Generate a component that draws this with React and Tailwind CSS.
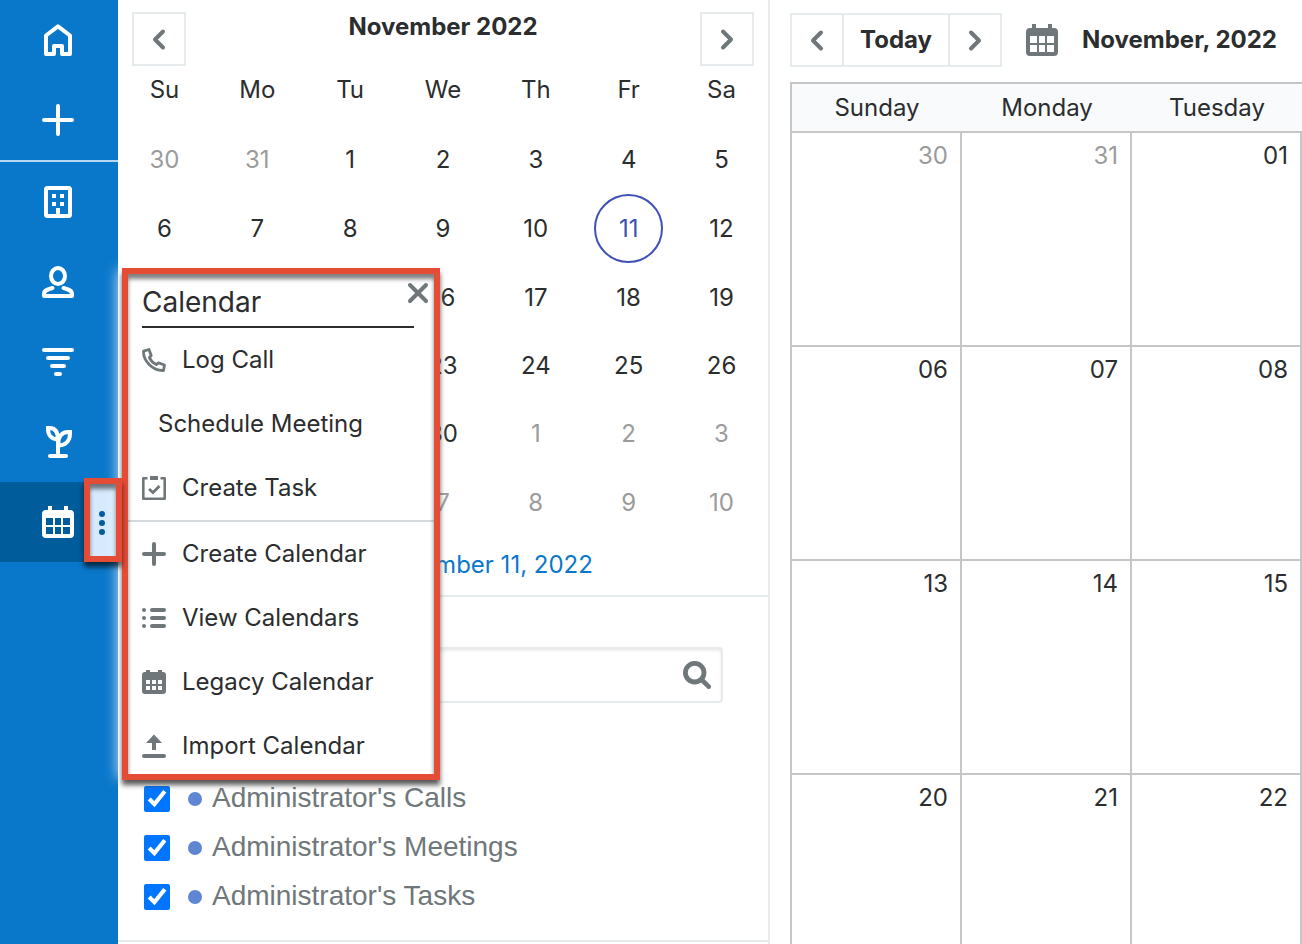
const DAY_NAMES = ['Su', 'Mo', 'Tu', 'We', 'Th', 'Fr', 'Sa'];

const MINI_WEEKS = [
  [30, 31, 1, 2, 3, 4, 5],
  [6, 7, 8, 9, 10, 11, 12],
  [13, 14, 15, 16, 17, 18, 19],
  [20, 21, 22, 23, 24, 25, 26],
  [27, 28, 29, 30, 1, 2, 3],
  [4, 5, 6, 7, 8, 9, 10],
];

const MAIN_WEEKS = [
  ['30', '31', '01'],
  ['06', '07', '08'],
  ['13', '14', '15'],
  ['20', '21', '22'],
];

const CALENDARS = ["Administrator's Calls", "Administrator's Meetings", "Administrator's Tasks"];

function Icon({ size = 'size-8', box = 32, children }) {
  return (
    <svg
      className={`${size} shrink-0`}
      viewBox={`0 0 ${box} ${box}`}
      fill="none"
      stroke="currentColor"
      strokeWidth="4"
      strokeLinecap="round"
      strokeLinejoin="round"
      aria-hidden="true"
    >
      {children}
    </svg>
  );
}

function HomeIcon() {
  return (
    <Icon>
      <path d="M16 2.4 4 11.500v18.500h8v-8h8v8h8V11.500z" />
    </Icon>
  );
}

function AddIcon() {
  return (
    <Icon>
      <path d="M2 16h28M16 2v28" />
    </Icon>
  );
}

function BuildingIcon() {
  return (
    <Icon>
      <rect x="4" y="2" width="24" height="28" rx="1.5" />
      <path d="M10 8h4v4h-4zM18 8h4v4h-4zM10 16h4v4h-4zM18 16h4v4h-4zM14 22h4v8h-4z" fill="currentColor" stroke="none" />
    </Icon>
  );
}

function PersonIcon() {
  return (
    <Icon>
      <ellipse cx="16" cy="10" rx="7" ry="8" />
      <path d="M10.5 22C5 23.4 2 24.6 2 28v2h28v-2c0-3.400-3-4.600-8.500-6" />
    </Icon>
  );
}

function FunnelIcon() {
  return (
    <Icon>
      <path d="M2 4h28M6 12h20M10 20h12M14 28h4" />
    </Icon>
  );
}

function PlantIcon() {
  return (
    <Icon>
      <path d="M16 13v17M8 30h16" />
      <path d="M6 2h1.500C13 2 16 6 16 13.500 10 13.500 6 9.500 6 3zM28 6h-2c-6 0-10 4.500-10 13.500C23.500 19.500 28 15 28 7.500z" strokeLinejoin="miter" />
    </Icon>
  );
}

function CalendarIcon() {
  return (
    <Icon>
      <path
        d="M6 4V0h4v4h12V0h4v4h2a4 4 0 0 1 4 4v20a4 4 0 0 1-4 4H4a4 4 0 0 1-4-4V8a4 4 0 0 1 4-4zM4 12v7h7v-7zM13 12v7h6v-7zM21 12v7h7v-7zM4 21v7h7v-7zM13 21v7h6v-7zM21 21v7h7v-7z"
        fill="currentColor"
        fillRule="evenodd"
        stroke="none"
      />
    </Icon>
  );
}

function Chevron({ right }) {
  return (
    <Icon size="size-6" box={24}>
      <path d={right ? 'm8 4.500 8 8-8 8' : 'm16 4.500-8 8 8 8'} />
    </Icon>
  );
}

function PhoneIcon() {
  return (
    <Icon size="size-6" box={24}>
      <path
        d="M1.500 3.200 7 1.500l2.200 6-1.900 2.200c1.500 3 4 5.400 7 6.900l2.200-1.700 6 2.100-1 5.500C11 23 1 13 1.500 3.200z"
        strokeWidth="2.800"
      />
    </Icon>
  );
}

function TaskIcon() {
  return (
    <Icon size="size-6" box={24}>
      <path d="M5.500 2.300H1.300v20.400h21.400V2.300h-4.200" strokeWidth="2.600" strokeLinecap="butt" />
      <path d="M8 0h8v4H8z" fill="currentColor" stroke="none" />
      <path d="m7 13 4 3.500 6.500-6.500" strokeWidth="2.800" strokeLinecap="butt" strokeLinejoin="miter" />
    </Icon>
  );
}

function PlusIcon() {
  return (
    <Icon size="size-6" box={24}>
      <path d="M2 12h20M12 2v20" />
    </Icon>
  );
}

function ListIcon() {
  return (
    <Icon size="size-6" box={24}>
      <path d="M2 4h0M2 12h0M2 20h0M10 4h12M10 12h12M10 20h12" />
    </Icon>
  );
}

function LegacyIcon() {
  return (
    <Icon size="size-6" box={24}>
      <path
        d="M4 2V0h4v2h8V0h4v2h1a3 3 0 0 1 3 3v16a3 3 0 0 1-3 3H3a3 3 0 0 1-3-3V5a3 3 0 0 1 3-3zM4 10v4h4v-4zM10 10v4h4v-4zM16 10v4h4v-4zM4 16v4h4v-4zM10 16v4h4v-4zM16 16v4h4v-4z"
        fill="currentColor"
        fillRule="evenodd"
        stroke="none"
      />
    </Icon>
  );
}

function ImportIcon() {
  return (
    <Icon size="size-6" box={24}>
      <path d="m12 .5 8 8.500h-6v7h-4V9H4z" fill="currentColor" stroke="none" />
      <path d="M2 22h20" />
    </Icon>
  );
}

function CloseIcon() {
  return (
    <Icon size="size-6" box={24}>
      <path d="m4 4 16 16M20 4 4 20" />
    </Icon>
  );
}

function SearchIcon() {
  return (
    <Icon size="size-7" box={28}>
      <circle cx="11.700" cy="11.700" r="9.300" strokeWidth="4.800" />
      <path d="m19 19 6.700 6.700" strokeWidth="4.600" />
    </Icon>
  );
}

const NAV_MODULES = [
  { label: 'Accounts', icon: <BuildingIcon /> },
  { label: 'Contacts', icon: <PersonIcon /> },
  { label: 'Opportunities', icon: <FunnelIcon /> },
  { label: 'Leads', icon: <PlantIcon /> },
];

const CREATE_ACTIONS = [
  { label: 'Log Call', icon: <PhoneIcon /> },
  { label: 'Schedule Meeting', icon: null },
  { label: 'Create Task', icon: <TaskIcon /> },
];

const CALENDAR_ACTIONS = [
  { label: 'Create Calendar', icon: <PlusIcon /> },
  { label: 'View Calendars', icon: <ListIcon /> },
  { label: 'Legacy Calendar', icon: <LegacyIcon /> },
  { label: 'Import Calendar', icon: <ImportIcon /> },
];

function Sidebar() {
  return (
    <nav className="w-[118px] shrink-0 bg-[#0a78ca] text-white">
      <div className="border-b-2 border-[#b5d7ef]">
        <a href="#home" aria-label="Home" className="flex h-20 items-center pl-[42px]">
          <HomeIcon />
        </a>
        <button type="button" aria-label="Quick create" className="flex h-20 w-full items-center pl-[42px]">
          <AddIcon />
        </button>
      </div>
      {NAV_MODULES.map((item) => (
        <a key={item.label} href="#module" aria-label={item.label} className="flex h-20 items-center pl-[42px]">
          {item.icon}
        </a>
      ))}
      <div className="relative flex h-20 bg-[#005c9b]">
        <a href="#calendar" aria-label="Calendar" className="flex flex-1 items-center pl-[42px]">
          <CalendarIcon />
        </a>
        <button
          type="button"
          aria-label="Calendar actions"
          className="flex w-8 flex-col items-center justify-center gap-[3px] bg-[#d7eafd] pt-[2px]"
        >
          <span className="size-[6px] rounded-full bg-[#005c9b]" />
          <span className="size-[6px] rounded-full bg-[#005c9b]" />
          <span className="size-[6px] rounded-full bg-[#005c9b]" />
        </button>
        <div className="pointer-events-none absolute -top-1 -right-1 bottom-0 z-20 w-[38px] border-[6px] border-[#e44c36] shadow-[0_5px_5px_rgba(0,0,0,0.65),inset_0_5px_4px_rgba(0,0,0,0.5)]" />
      </div>
    </nav>
  );
}

function MenuItem({ label, icon }) {
  return (
    <li>
      <button type="button" className={`flex h-16 w-full items-center gap-4 ${icon ? 'pl-6' : 'pl-10'}`}>
        <span className="contents text-[#6f777b]">{icon}</span>
        {label}
      </button>
    </li>
  );
}

function CalendarMenu() {
  return (
    <div className="absolute top-[270px] left-[118px] z-10 w-[318px] bg-white shadow-[0_0_12px_rgba(255,255,255,0.8)]">
      <h2 className="ml-6 h-[58px] w-[272px] border-b-2 border-[#2b2d2e] pt-4 text-[28px] leading-8">Calendar</h2>
      <button type="button" aria-label="Close" className="absolute top-[11px] right-[6px] text-[#6f777b]">
        <CloseIcon />
      </button>
      <ul className="border-b-2 border-[#d5dade]">
        {CREATE_ACTIONS.map((item) => (
          <MenuItem key={item.label} {...item} />
        ))}
      </ul>
      <ul>
        {CALENDAR_ACTIONS.map((item) => (
          <MenuItem key={item.label} {...item} />
        ))}
      </ul>
      <div className="pointer-events-none absolute -top-[2px] -right-1 -bottom-[2px] left-1 z-30 border-[6px] border-[#e44c36] shadow-[0_5px_5px_rgba(0,0,0,0.65),inset_0_5px_4px_rgba(0,0,0,0.5)]" />
    </div>
  );
}

function MiniDay({ day, week }) {
  const outside = (week === 0 && day > 20) || (week > 3 && day < 20);
  if (week === 1 && day === 11) {
    return (
      <span className="mx-auto flex size-[69px] items-center justify-center rounded-full border-2 border-[#3f51b5] text-[#3f51b5]">
        {day}
      </span>
    );
  }
  return <span className={outside ? 'text-[#9b9b9b]' : ''}>{day}</span>;
}

function MiniCalendar() {
  return (
    <section className="border-b-2 border-[#e5eaed]">
      <header className="flex items-start justify-between px-[14px] pt-3">
        <button type="button" aria-label="Previous month" className="flex size-[54px] items-center justify-center border-2 border-[#e5eaed] text-[#6f777b]">
          <Chevron />
        </button>
        <h2 className="text-2xl leading-[30px] font-bold">November 2022</h2>
        <button type="button" aria-label="Next month" className="flex size-[54px] items-center justify-center border-2 border-[#e5eaed] text-[#6f777b]">
          <Chevron right />
        </button>
      </header>
      <table className="h-[471px] w-full table-fixed text-center">
        <thead>
          <tr className="h-[60px] align-top">
            {DAY_NAMES.map((name) => (
              <th key={name} className="pt-2 font-normal">
                {name}
              </th>
            ))}
          </tr>
        </thead>
        <tbody>
          {MINI_WEEKS.map((days, week) => (
            <tr key={week} className="h-[68px]">
              {days.map((day) => (
                <td key={day} className="p-0">
                  <MiniDay day={day} week={week} />
                </td>
              ))}
            </tr>
          ))}
        </tbody>
      </table>
      <div className="flex h-[58px] items-center justify-center pb-[2px]">
        <a href="#today" className="text-[#0a78ca]">
          Today: November 11, 2022
        </a>
      </div>
    </section>
  );
}

function CalendarFilters() {
  return (
    <section className="border-b-2 border-[#e5eaed] pt-[50px] pb-[19px]">
      <div className="mr-[45px] ml-[26px] flex h-14 items-center rounded border-2 border-[#e5eaed] pr-[10px] shadow-[inset_0_2px_3px_rgba(0,0,0,0.08)]">
        <input type="text" aria-label="Search calendars" className="h-full flex-1 px-3 outline-none" />
        <button type="button" aria-label="Search" className="text-[#6f777b]">
          <SearchIcon />
        </button>
      </div>
      <ul className="mt-[71px] font-['Liberation_Sans',Arial,sans-serif] text-[28px] leading-8 text-[#6f777b]">
        {CALENDARS.map((name) => (
          <li key={name}>
            <label className="flex h-[49px] items-center pl-[26px]">
              <input type="checkbox" defaultChecked className="size-[26px] accent-[#0075ff]" />
              <span className="mr-[10px] ml-[18px] size-[14px] rounded-full bg-[#5f86d2]" />
              <span className="pb-[2px]">{name}</span>
            </label>
          </li>
        ))}
      </ul>
    </section>
  );
}

function MainCalendar() {
  return (
    <main className="flex-1 pl-5">
      <header className="flex items-center pt-[13px] pb-[15px]">
        <div className="flex h-[54px] divide-x-2 divide-[#e5eaed] border-2 border-[#e5eaed] text-[#6f777b]">
          <button type="button" aria-label="Previous" className="flex w-[52px] items-center justify-center">
            <Chevron />
          </button>
          <button type="button" className="w-[106px] font-bold text-[#2b2d2e]">
            Today
          </button>
          <button type="button" aria-label="Next" className="flex w-[50px] items-center justify-center">
            <Chevron right />
          </button>
        </div>
        <button type="button" aria-label="Pick a date" className="mx-6 text-[#6f777b]">
          <CalendarIcon />
        </button>
        <h1 className="font-bold whitespace-nowrap">November, 2022</h1>
      </header>
      <table className="w-full table-fixed border-separate border-spacing-0 border-t-2 border-l-2 border-[#c6c6c6]">
        <thead>
          <tr className="h-[49px] bg-[#f8fafc]">
            {['Sunday', 'Monday', 'Tuesday'].map((name) => (
              <th key={name} className="border-b-2 border-[#c6c6c6] p-0 font-normal">
                {name}
              </th>
            ))}
          </tr>
        </thead>
        <tbody>
          {MAIN_WEEKS.map((days, week) => (
            <tr key={week} className="h-[214px] align-top">
              {days.map((day) => (
                <td
                  key={day}
                  className={`border-r-2 border-b-2 border-[#c6c6c6] pt-[7px] pr-3 text-right ${week === 0 && day !== '01' ? 'text-[#9b9b9b]' : ''}`}
                >
                  {day}
                </td>
              ))}
            </tr>
          ))}
        </tbody>
      </table>
    </main>
  );
}

export default function App() {
  return (
    <div className="relative flex h-screen overflow-hidden bg-white font-[Inter,sans-serif] text-2xl leading-8 text-[#2b2d2e]">
      <Sidebar />
      <div className="w-[652px] shrink-0 border-r-2 border-[#e5eaed]">
        <MiniCalendar />
        <CalendarFilters />
      </div>
      <MainCalendar />
      <CalendarMenu />
    </div>
  );
}
